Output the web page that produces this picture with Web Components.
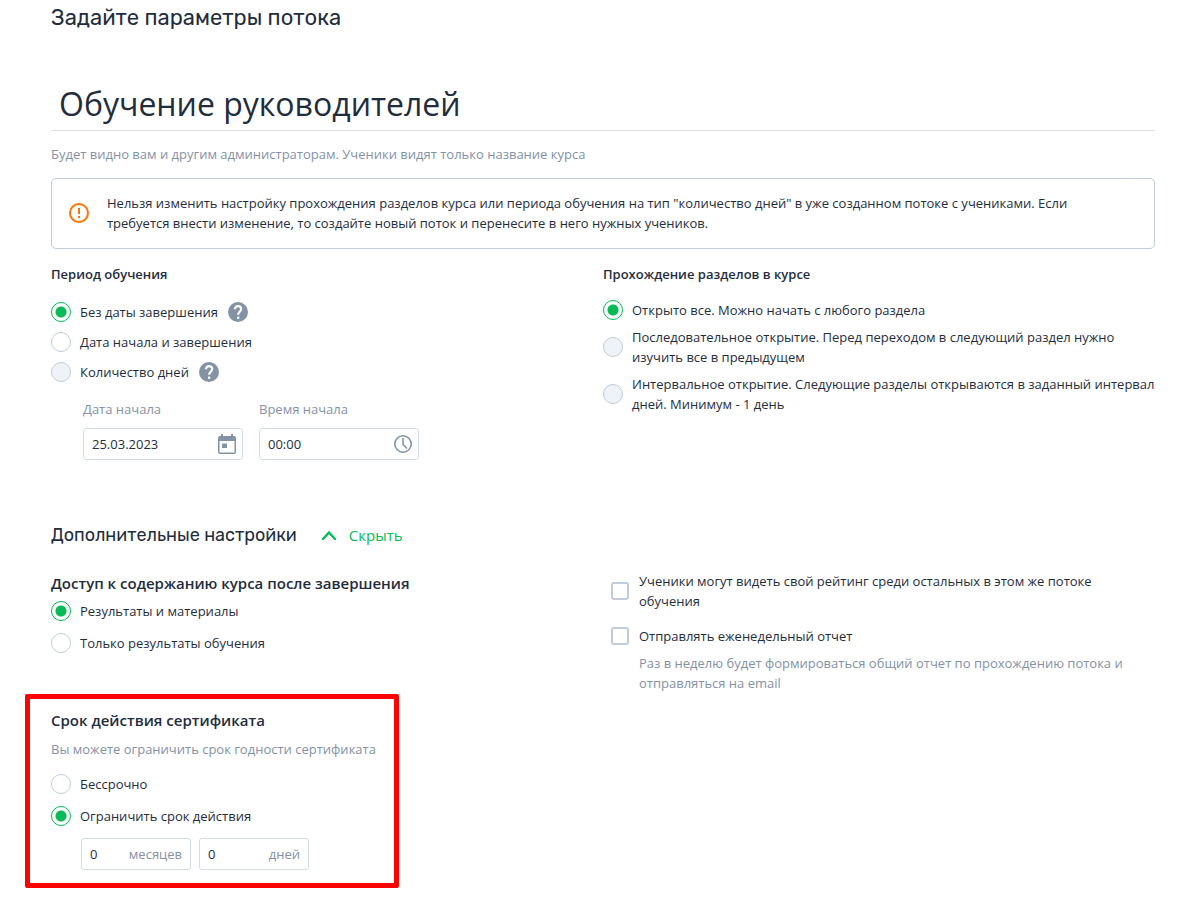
<!DOCTYPE html>
<html lang="ru">
<head>
<meta charset="utf-8">
<meta name="viewport" content="width=device-width, initial-scale=1">
<title>Параметры потока</title>
<style>
    body {
        margin: 0;
        background: #fff;
    }
</style>
</head>
<body>
<stream-settings></stream-settings>

<script>
class HelpTip extends HTMLElement {
    constructor() {
        super();
        this.attachShadow({ mode: 'open' });
        this.shadowRoot.innerHTML = `
        <style>
            :host {
                display: block;
                height: 20px;
            }
            button {
                display: block;
                padding: 0;
                border: 0;
                background: none;
                cursor: pointer;
            }
            svg {
                display: block;
            }
        </style>
        <button type="button" aria-label="Подсказка">
            <svg width="20" height="20" viewBox="0 0 20 20" fill="none">
                <circle cx="10" cy="10" r="10" fill="#8492a6"/>
                <path d="M6.900 7.300C6.900 5.300 8.200 4.100 10 4.100s3.200 1.200 3.200 2.900c0 2.300-3 2.700-3 5.800" stroke="#fff" stroke-width="2.200"/>
                <path d="M9 14.600h2.300v2.300H9z" fill="#fff"/>
            </svg>
        </button>`;
    }
}

// One radio or checkbox with its label, the default slot is the label text
class ChoiceOption extends HTMLElement {
    constructor() {
        super();
        this.attachShadow({ mode: 'open' });
        this.shadowRoot.innerHTML = `
        <style>
            :host {
                display: flex;
                align-items: center;
                gap: 10px;
                min-height: var(--option-height, 20px);
            }
            label {
                display: flex;
                align-items: center;
                gap: 9px;
                cursor: pointer;
            }
            input {
                appearance: none;
                box-sizing: border-box;
                flex: none;
                width: 20px;
                height: 20px;
                margin: 0;
                border: 1px solid #c0ccda;
                border-radius: 50%;
                background: #fff;
                cursor: inherit;
            }
            input:disabled {
                background: #eff2f7;
            }
            input[type=radio]:checked {
                border-color: #06ba55;
                background: radial-gradient(circle, #06ba55 5px, #fff 6px);
            }
            input[type=checkbox] {
                width: 18px;
                height: 18px;
                border-width: 2px;
                border-radius: 3px;
            }
            input[type=checkbox]:checked {
                border-color: #06ba55;
                background: #06ba55;
            }
            :host([type=checkbox]) label {
                gap: 10px;
            }
        </style>
        <label><input><span><slot></slot></span></label>
        <slot name="after"></slot>`;
        this._input = this.shadowRoot.querySelector('input');
    }

    connectedCallback() {
        this._input.type = this.getAttribute('type') || 'radio';
        this._input.checked = this.hasAttribute('checked');
        this._input.disabled = this.hasAttribute('disabled');
        this._input.addEventListener('change', () => {
            this.dispatchEvent(new CustomEvent('pick', { bubbles: true }));
        });
    }

    get checked() {
        return this._input.checked;
    }

    set checked(value) {
        this._input.checked = value;
    }
}

// Radios live in separate shadow roots, so the group keeps only one of them on
class ChoiceGroup extends HTMLElement {
    constructor() {
        super();
        this.attachShadow({ mode: 'open' });
        this.shadowRoot.innerHTML = `
        <style>
            :host {
                display: flex;
                flex-direction: column;
                gap: var(--group-gap, 0);
            }
        </style>
        <slot></slot>`;
    }

    connectedCallback() {
        this.setAttribute('role', 'radiogroup');
        this.addEventListener('pick', (event) => {
            this.querySelectorAll('choice-option').forEach((option) => {
                option.checked = option === event.target;
            });
        });
    }
}

class TextField extends HTMLElement {
    constructor() {
        super();
        this.attachShadow({ mode: 'open' });
        this.shadowRoot.innerHTML = `
        <style>
            :host {
                display: block;
                width: var(--field-width, 160px);
            }
            .caption {
                display: block;
                margin-bottom: 9px;
                color: #8492a6;
            }
            .caption:empty {
                display: none;
            }
            .box {
                display: flex;
                align-items: center;
                box-sizing: border-box;
                height: 32px;
                padding: 0 8px;
                border: 1px solid #d3dce6;
                border-radius: 3px;
                color: #8492a6;
            }
            :host([label]) .box {
                padding-right: 6px;
            }
            .box:focus-within {
                border-color: #06ba55;
            }
            input {
                flex: 1;
                min-width: 0;
                padding: 0;
                border: 0;
                outline: 0;
                background: none;
                color: #1f2d3d;
                font: inherit;
            }
        </style>
        <label class="caption" for="field"></label>
        <div class="box">
            <input id="field" type="text">
            <slot></slot>
        </div>`;
    }

    connectedCallback() {
        const input = this.shadowRoot.querySelector('input');
        input.value = this.getAttribute('value') || '';
        if (this.hasAttribute('label')) {
            this.shadowRoot.querySelector('.caption').textContent = this.getAttribute('label');
        } else {
            input.setAttribute('aria-label', this.textContent.trim());
        }
    }
}

class InfoAlert extends HTMLElement {
    constructor() {
        super();
        this.attachShadow({ mode: 'open' });
        this.shadowRoot.innerHTML = `
        <style>
            :host {
                display: flex;
                align-items: center;
                gap: 18px;
                padding: 14px 64px 15px 17px;
                border: 1px solid #c0ccda;
                border-radius: 5px;
            }
            svg {
                flex: none;
            }
        </style>
        <svg width="20" height="20" viewBox="0 0 20 20" fill="none" stroke="#ff7200" stroke-width="2" aria-hidden="true">
            <circle cx="10" cy="10" r="9"/>
            <path d="M10 5v6M10 13v2"/>
        </svg>
        <div><slot></slot></div>`;
    }
}

class HighlightFrame extends HTMLElement {
    constructor() {
        super();
        this.attachShadow({ mode: 'open' });
        this.shadowRoot.innerHTML = `
        <style>
            :host {
                display: block;
                width: fit-content;
                padding: 11px 18px 13px 21px;
                border: 5px solid #f00;
                border-radius: 2px;
            }
        </style>
        <slot></slot>`;
    }
}

class StreamSettings extends HTMLElement {
    constructor() {
        super();
        this.attachShadow({ mode: 'open' });
        this.shadowRoot.innerHTML = `
        <style>
            :host {
                display: block;
                padding: 0 44px 11px 51px;
                color: #1f2d3d;
                font: 13px/20px "Open Sans", "Noto Sans", sans-serif;
            }
            h1, h2, h3, p {
                margin: 0;
            }
            h1 {
                font: 400 22px/36px Rubik, Roboto, sans-serif;
            }
            h2 {
                font: 400 18px/24px Rubik, Roboto, sans-serif;
            }
            h3 {
                font-size: 13px;
                font-weight: 600;
            }
            .large {
                font-size: 15px;
            }
            .name {
                display: block;
                box-sizing: border-box;
                width: 100%;
                height: 47px;
                margin: 48px 0 13px;
                padding: 0 8px 8px;
                border: 0;
                border-bottom: 1px solid #e0e0e0;
                outline: 0;
                color: inherit;
                font: 400 32px/40px "Open Sans", "Noto Sans", sans-serif;
            }
            .muted {
                color: #8492a6;
            }
            info-alert {
                margin: 14px 0 15px;
            }
            .columns {
                display: grid;
                grid-template-columns: 1fr 1fr;
            }
            .period {
                --option-height: 30px;
                margin-top: 13px;
            }
            .sections {
                --group-gap: 7px;
                margin-top: 16px;
            }
            .fields {
                display: flex;
                gap: 16px;
                margin: 12px 0 0 32px;
            }
            .more {
                display: flex;
                align-items: center;
                gap: 24px;
                margin: 63px 0 24px;
            }
            .toggle {
                display: flex;
                align-items: center;
                gap: 12px;
                padding: 0;
                border: 0;
                background: none;
                color: #06ba55;
                font: 15px/24px "Open Sans", "Noto Sans", sans-serif;
                cursor: pointer;
            }
            .access {
                padding-top: 2px;
            }
            .tall {
                --option-height: 32px;
                margin-top: 2px;
            }
            .flags {
                padding-left: 8px;
            }
            .flags choice-option + choice-option {
                margin-top: 15px;
            }
            .flags p {
                margin: 7px 0 0 28px;
            }
            highlight-frame {
                margin: 35px 0 0 -26px;
            }
            highlight-frame p {
                margin: 9px 0;
            }
            .limits {
                --field-width: 110px;
                display: flex;
                gap: 8px;
                margin: 6px 0 0 30px;
            }
        </style>
        <h1>Задайте параметры потока</h1>
        <input class="name" type="text" aria-label="Название потока" value="Обучение руководителей">
        <p class="muted">Будет видно вам и другим администраторам. Ученики видят только название курса</p>
        <info-alert>Нельзя изменить настройку прохождения разделов курса или периода обучения на тип "количество дней" в уже созданном потоке с учениками. Если требуется внести изменение, то создайте новый поток и перенесите в него нужных учеников.</info-alert>

        <div class="columns">
            <section>
                <h3>Период обучения</h3>
                <choice-group class="period" aria-label="Период обучения">
                    <choice-option checked>Без даты завершения<help-tip slot="after"></help-tip></choice-option>
                    <choice-option>Дата начала и завершения</choice-option>
                    <choice-option disabled>Количество дней<help-tip slot="after"></help-tip></choice-option>
                </choice-group>
                <div class="fields">
                    <text-field label="Дата начала" value="25.03.2023">
                        <svg width="18" height="20" viewBox="0 0 18 20" fill="#8492a6" aria-hidden="true">
                            <path fill-rule="evenodd" d="M3 0h2v2h8V0h2v2h1a2 2 0 0 1 2 2v14a2 2 0 0 1-2 2H2a2 2 0 0 1-2-2V4a2 2 0 0 1 2-2h1zM1.500 7v11.500h15V7z"/>
                            <path d="M4 9.500h5v4.500H4z"/>
                        </svg>
                    </text-field>
                    <text-field label="Время начала" value="00:00">
                        <svg width="18" height="18" viewBox="0 0 18 18" fill="none" stroke="#8492a6" stroke-width="1.600" aria-hidden="true">
                            <circle cx="9" cy="9" r="8.200"/>
                            <path d="M9 3v6.500l4 4"/>
                        </svg>
                    </text-field>
                </div>
            </section>
            <section>
                <h3>Прохождение разделов в курсе</h3>
                <choice-group class="sections" aria-label="Прохождение разделов в курсе">
                    <choice-option checked>Открыто все. Можно начать с любого раздела</choice-option>
                    <choice-option disabled>Последовательное открытие. Перед переходом в следующий раздел нужно изучить все в предыдущем</choice-option>
                    <choice-option disabled>Интервальное открытие. Следующие разделы открываются в заданный интервал дней. Минимум - 1 день</choice-option>
                </choice-group>
            </section>
        </div>

        <div class="more">
            <h2>Дополнительные настройки</h2>
            <button class="toggle" type="button" aria-expanded="true">
                <svg width="16" height="10" viewBox="0 0 16 10" fill="none" stroke="#06ba55" stroke-width="2.400" stroke-linecap="round" aria-hidden="true">
                    <path d="M2 9l6-6.500L14 9"/>
                </svg>
                <span>Скрыть</span>
            </button>
        </div>

        <div class="columns">
            <section class="access">
                <h3 class="large">Доступ к содержанию курса после завершения</h3>
                <choice-group class="tall" aria-label="Доступ к содержанию курса">
                    <choice-option checked>Результаты и материалы</choice-option>
                    <choice-option>Только результаты обучения</choice-option>
                </choice-group>
                <highlight-frame>
                    <h3 class="large">Срок действия сертификата</h3>
                    <p class="muted">Вы можете ограничить срок годности сертификата</p>
                    <choice-group class="tall" aria-label="Срок действия сертификата">
                        <choice-option>Бессрочно</choice-option>
                        <choice-option checked>Ограничить срок действия</choice-option>
                    </choice-group>
                    <div class="limits">
                        <text-field value="0">месяцев</text-field>
                        <text-field value="0">дней</text-field>
                    </div>
                </highlight-frame>
            </section>
            <section class="flags">
                <choice-option type="checkbox">Ученики могут видеть свой рейтинг среди остальных в этом же потоке обучения</choice-option>
                <choice-option type="checkbox">Отправлять еженедельный отчет</choice-option>
                <p class="muted">Раз в неделю будет формироваться общий отчет по прохождению потока и отправляться на email</p>
            </section>
        </div>`;
    }
}

customElements.define('help-tip', HelpTip);
customElements.define('choice-option', ChoiceOption);
customElements.define('choice-group', ChoiceGroup);
customElements.define('text-field', TextField);
customElements.define('info-alert', InfoAlert);
customElements.define('highlight-frame', HighlightFrame);
customElements.define('stream-settings', StreamSettings);
</script>
</body>
</html>
